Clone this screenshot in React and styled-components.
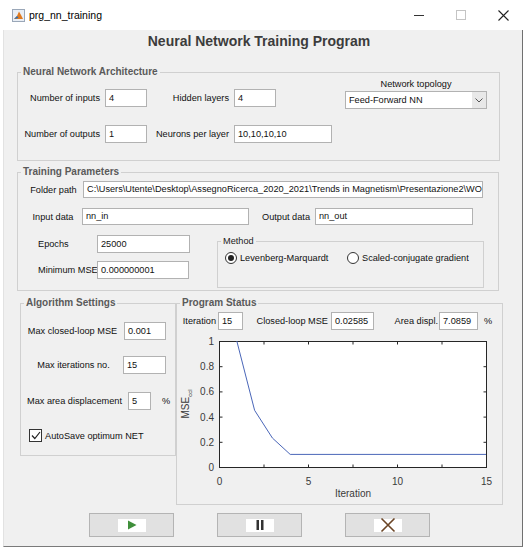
import React from 'react'
import styled, { createGlobalStyle } from 'styled-components'

const GlobalStyle = createGlobalStyle`
  html, body { margin: 0; padding: 0; background: #fff; }
  body { font-family: "Liberation Sans", Arial, sans-serif; color: #111; }
  * { box-sizing: border-box; }
`

const Window = styled.div`
  width: 528px;
  height: 550px;
  background: #fff;
  overflow: hidden;
`

const TitleBar = styled.div`
  height: 30px;
  display: flex;
  align-items: center;
  padding-left: 12px;
  font-size: 10.5px;
  color: #000;
`

const AppIcon = styled.svg`
  width: 13px;
  height: 13px;
  margin-right: 4px;
`

const Controls = styled.div`
  margin-left: auto;
  display: flex;
  padding-right: 4px;
`

const Control = styled.div`
  width: 42px;
  height: 30px;
  display: flex;
  align-items: center;
  justify-content: center;
`

const Client = styled.div`
  margin-left: 3px;
  width: 520px;
  height: 517px;
  background: #f0f0f0;
  border-left: 1px solid #e2e2e2;
  border-right: 1px solid #707070;
  border-bottom: 1px solid #7a7a7a;
  display: flex;
  flex-direction: column;
`

const Heading = styled.div`
  padding-top: 3px;
  padding-right: 8px;
  line-height: 16px;
  font-size: 14px;
  font-weight: bold;
  color: #3c3c3c;
  text-align: center;
`

const Stack = styled.div`
  display: flex;
  flex-direction: column;
  padding-left: ${p => p.$pl || 0}px;
`

const BottomRow = styled.div`
  display: flex;
  align-items: flex-start;
  padding-left: 16px;
  margin-top: 6px;
`

const Panel = styled.fieldset`
  margin: ${p => p.$mt || 0}px 0 0 ${p => p.$ml || 0}px;
  padding: 0;
  min-width: 0;
  width: ${p => p.$w}px;
  height: ${p => p.$h}px;
  border: 1px solid #d0d0d0;
`

const Legend = styled.legend`
  margin-left: 3px;
  padding: 0 2px;
  line-height: 12px;
  font-size: ${p => (p.$plain ? '9.2px' : '10px')};
  font-weight: ${p => (p.$plain ? 'normal' : 'bold')};
  color: ${p => (p.$plain ? '#222' : '#5a5a5a')};
`

const Label = styled.div`
  width: ${p => p.$w}px;
  flex: none;
  font-size: 9.2px;
  line-height: 12px;
  white-space: nowrap;
  text-align: ${p => p.$align || 'center'};
  padding-right: ${p => p.$pr || 0}px;
  margin-left: ${p => p.$ml || 0}px;
  color: #111;
`

const Input = styled.div`
  width: ${p => p.$w}px;
  height: ${p => p.$h || 18}px;
  flex: none;
  background: #fff;
  border: 1px solid #b2b2b2;
  font-size: 9.2px;
  line-height: ${p => (p.$h || 18) - 2}px;
  padding-left: 3px;
  white-space: nowrap;
  overflow: hidden;
  color: #111;
`

const Row = styled.div`
  display: flex;
  align-items: center;
  padding-left: ${p => p.$pl || 0}px;
  margin-top: ${p => p.$mt || 0}px;
`

const ArchBody = styled.div`
  display: flex;
  align-items: flex-start;
`

const ArchGrid = styled.div`
  display: grid;
  grid-template-columns: 87px 42px 87px auto;
  grid-auto-rows: 18px;
  row-gap: 18px;
  align-items: center;
  padding-top: 11px;
`

const GridLabel = styled.div`
  font-size: 9.2px;
  text-align: right;
  padding-right: 5px;
  white-space: nowrap;
`

const Topology = styled.div`
  margin-left: auto;
  margin-right: 12px;
  width: 142px;
  display: flex;
  flex-direction: column;
  gap: 1px;
`

const TopologyLabel = styled.div`
  font-size: 9.2px;
  line-height: 12px;
  text-align: center;
`

const Select = styled.div`
  height: 18px;
  display: flex;
  background: #fff;
  border: 1px solid #b2b2b2;
  font-size: 9.2px;
  align-items: center;
  padding-left: 3px;
`

const SelectArrow = styled.div`
  margin-left: auto;
  width: 14px;
  height: 100%;
  background: #e8e8e8;
  display: flex;
  align-items: center;
  justify-content: center;
`

const TrainBody = styled.div`
  display: flex;
  flex-direction: column;
  padding: 3px 0 0 6px;
`

const TrainLower = styled.div`
  display: flex;
  align-items: flex-start;
  margin-top: 10px;
`

const LeftCol = styled.div`
  display: flex;
  flex-direction: column;
  gap: 8px;
  margin-left: 14px;
`

const RadioRow = styled.div`
  display: flex;
  align-items: center;
  padding: 5px 0 0 7px;
`

const RadioItem = styled.div`
  width: ${p => p.$w}px;
  display: flex;
  align-items: center;
  gap: 3px;
  font-size: 9.2px;
  white-space: nowrap;
`

const RadioDot = styled.span`
  width: 12px;
  height: 12px;
  border-radius: 50%;
  border: 1px solid #333;
  background: #fff;
  display: flex;
  align-items: center;
  justify-content: center;
  &::after {
    content: '';
    width: 6px;
    height: 6px;
    border-radius: 50%;
    background: ${p => (p.$on ? '#222' : 'transparent')};
  }
`

const Check = styled.span`
  width: 13px;
  height: 13px;
  border: 1px solid #333;
  background: #fff;
  display: flex;
  align-items: center;
  justify-content: center;
  margin-right: 3px;
`

const CheckText = styled.span`
  font-size: 9.2px;
`

const StatusRow = styled.div`
  display: flex;
  align-items: center;
  padding-top: 3px;
`

const Plot = styled.svg`
  display: block;
  margin-top: 2px;
  font-family: "Liberation Sans", Arial, sans-serif;
`

const ButtonRow = styled.div`
  display: flex;
  gap: 43px;
  padding-left: 85px;
  margin-top: 8px;
`

const Button = styled.div`
  width: ${p => p.$w}px;
  height: 24px;
  background: #e1e1e1;
  border: 1px solid #b4b4b4;
  display: flex;
  align-items: center;
  justify-content: center;
`

const IconPatch = styled.div`
  width: 28px;
  height: 13px;
  background: #fff;
  display: flex;
  align-items: center;
  justify-content: center;
`

const X0 = 42
const Y0 = 135
const PW = 267
const PH = 126
const sx = i => X0 + (i / 15) * PW
const sy = v => Y0 - v * PH

const curve = [[1, 1], [2, 0.45], [3, 0.23], [4, 0.1], [15, 0.1]]

function Chart() {
  const yTicks = [0, 0.2, 0.4, 0.6, 0.8, 1]
  const xTicks = [0, 2.5, 5, 7.5, 10, 12.5, 15]
  const pts = curve.map(([i, v]) => `${sx(i)},${sy(v)}`).join(' ')
  return (
    <Plot width="323" height="170" viewBox="0 0 323 170">
      <rect x={X0 + 0.5} y={9.5} width={PW} height={PH} fill="#fff" stroke="#262626" />
      {yTicks.map(v => (
        <g key={v}>
          <line x1={X0 + 0.5} x2={X0 + 3.5} y1={sy(v) + 0.5} y2={sy(v) + 0.5} stroke="#262626" />
          <line x1={X0 + PW + 0.5} x2={X0 + PW - 2.5} y1={sy(v) + 0.5} y2={sy(v) + 0.5} stroke="#262626" />
          <text x="37" y={sy(v) + 4} fontSize="10" fill="#3a3a3a" textAnchor="end">{v}</text>
        </g>
      ))}
      {xTicks.map(t => (
        <g key={t}>
          <line x1={sx(t) + 0.5} x2={sx(t) + 0.5} y1={Y0 + 0.5} y2={Y0 - 2.5} stroke="#262626" />
          <line x1={sx(t) + 0.5} x2={sx(t) + 0.5} y1={9.5} y2={12.5} stroke="#262626" />
        </g>
      ))}
      {[0, 5, 10, 15].map(t => (
        <text key={t} x={sx(t) + 0.5} y="153" fontSize="10" fill="#3a3a3a" textAnchor="middle">{t}</text>
      ))}
      <clipPath id="plotClip">
        <rect x={X0} y={9} width={PW + 1} height={PH + 1} />
      </clipPath>
      <polyline points={pts} fill="none" stroke="#4a66b8" strokeWidth="1" clipPath="url(#plotClip)" />
      <text x="176" y="165" fontSize="10" fill="#3a3a3a" textAnchor="middle">Iteration</text>
      <text transform="translate(12,72) rotate(-90)" fontSize="10" fill="#3a3a3a" textAnchor="middle">
        MSE<tspan fontSize="6" dy="3">ccl</tspan>
      </text>
    </Plot>
  )
}

export default function App() {
  return (
    <Window>
      <GlobalStyle />
      <TitleBar>
        <AppIcon viewBox="0 0 13 13">
          <rect x="0.5" y="0.5" width="12" height="12" fill="#e9eef5" stroke="#9aa7b8" />
          <path d="M2 10 L5 7 L7 2.5 L9 6 L11 10 Z" fill="#e07a1f" />
          <path d="M2 10 L5 7 L6.5 9 Z" fill="#2a6fb8" />
        </AppIcon>
        prg_nn_training
        <Controls>
          <Control>
            <svg width="10" height="10" viewBox="0 0 10 10"><line x1="0" y1="5.5" x2="10" y2="5.5" stroke="#333" /></svg>
          </Control>
          <Control>
            <svg width="10" height="10" viewBox="0 0 10 10"><rect x="0.5" y="0.5" width="9" height="9" fill="none" stroke="#c4c4c4" /></svg>
          </Control>
          <Control>
            <svg width="11" height="11" viewBox="0 0 11 11"><path d="M0.5 0.5 L10.5 10.5 M10.5 0.5 L0.5 10.5" stroke="#222" strokeWidth="1.1" /></svg>
          </Control>
        </Controls>
      </TitleBar>

      <Client>
        <Heading>Neural Network Training Program</Heading>

        <Stack $pl={13}>
          <Panel $w={483} $h={95} $mt={17}>
            <Legend>Neural Network Architecture</Legend>
            <ArchBody>
              <ArchGrid>
                <GridLabel>Number of inputs</GridLabel>
                <Input $w={42}>4</Input>
                <GridLabel>Hidden layers</GridLabel>
                <Input $w={42}>4</Input>
                <GridLabel>Number of outputs</GridLabel>
                <Input $w={42}>1</Input>
                <GridLabel>Neurons per layer</GridLabel>
                <Input $w={98}>10,10,10,10</Input>
              </ArchGrid>
              <Topology>
                <TopologyLabel>Network topology</TopologyLabel>
                <Select>
                  Feed-Forward NN
                  <SelectArrow>
                    <svg width="8" height="5" viewBox="0 0 8 5"><path d="M0.5 0.5 L4 4 L7.5 0.5" fill="none" stroke="#555" /></svg>
                  </SelectArrow>
                </Select>
              </Topology>
            </ArchBody>
          </Panel>

          <Panel $w={482} $h={125} $mt={5}>
            <Legend>Training Parameters</Legend>
            <TrainBody>
              <Row>
                <Label $w={59}>Folder path</Label>
                <Input $w={400} $h={17}>C:\Users\Utente\Desktop\AssegnoRicerca_2020_2021\Trends in Magnetism\Presentazione2\WO</Input>
              </Row>
              <Row $mt={10}>
                <Label $w={58}>Input data</Label>
                <Input $w={167} $h={17}>nn_in</Input>
                <Label $w={58} $ml={8}>Output data</Label>
                <Input $w={158} $h={17}>nn_out</Input>
              </Row>
              <TrainLower>
                <LeftCol>
                  <Row>
                    <Label $w={59} $align="left">Epochs</Label>
                    <Input $w={93}>25000</Input>
                  </Row>
                  <Row>
                    <Label $w={59} $align="left">Minimum MSE</Label>
                    <Input $w={92}>0.000000001</Input>
                  </Row>
                </LeftCol>
                <Panel $w={267} $h={53} $ml={27}>
                  <Legend $plain>Method</Legend>
                  <RadioRow>
                    <RadioItem $w={122}><RadioDot $on />Levenberg-Marquardt</RadioItem>
                    <RadioItem $w={130}><RadioDot />Scaled-conjugate gradient</RadioItem>
                  </RadioRow>
                </Panel>
              </TrainLower>
            </TrainBody>
          </Panel>
        </Stack>

        <BottomRow>
          <Panel $w={156} $h={159}>
            <Legend>Algorithm Settings</Legend>
            <Stack>
              <Row $mt={13}>
                <Label $w={103}>Max closed-loop MSE</Label>
                <Input $w={42}>0.001</Input>
              </Row>
              <Row $mt={16} $pl={3}>
                <Label $w={99}>Max iterations no.</Label>
                <Input $w={43}>15</Input>
              </Row>
              <Row $mt={18}>
                <Label $w={107}>Max area displacement</Label>
                <Input $w={23}>5</Input>
                <Label $w={12} $ml={9}>%</Label>
              </Row>
              <Row $mt={19} $pl={8}>
                <Check>
                  <svg width="10" height="9" viewBox="0 0 10 9"><path d="M1 4.5 L3.8 7.5 L9 1" fill="none" stroke="#222" strokeWidth="1.2" /></svg>
                </Check>
                <CheckText>AutoSave optimum NET</CheckText>
              </Row>
            </Stack>
          </Panel>

          <Panel $w={327} $h={208}>
            <Legend>Program Status</Legend>
            <StatusRow>
              <Label $w={41} $align="right" $pr={2}>Iteration</Label>
              <Input $w={25}>15</Input>
              <Label $w={88} $align="right" $pr={3}>Closed-loop MSE</Label>
              <Input $w={43}>0.02585</Input>
              <Label $w={65} $align="right" $pr={1}>Area displ.</Label>
              <Input $w={39}>7.0859</Input>
              <Label $w={12} $ml={4}>%</Label>
            </StatusRow>
            <Chart />
          </Panel>
        </BottomRow>

        <ButtonRow>
          <Button $w={85}>
            <IconPatch>
              <svg width="10" height="10" viewBox="0 0 10 10"><path d="M1 0.5 L9.5 5 L1 9.5 Z" fill="#3f8f3a" /></svg>
            </IconPatch>
          </Button>
          <Button $w={85}>
            <IconPatch>
              <svg width="10" height="10" viewBox="0 0 10 10"><rect x="1.5" y="0" width="2.5" height="10" fill="#333" /><rect x="6" y="0" width="2.5" height="10" fill="#333" /></svg>
            </IconPatch>
          </Button>
          <Button $w={85}>
            <IconPatch>
              <svg width="16" height="16" viewBox="0 0 16 16" style={{ overflow: 'visible' }}><path d="M1.5 1.5 L14.5 14.5 M14.5 1.5 L1.5 14.5" stroke="#6b4526" strokeWidth="1.6" /></svg>
            </IconPatch>
          </Button>
        </ButtonRow>
      </Client>
    </Window>
  )
}
